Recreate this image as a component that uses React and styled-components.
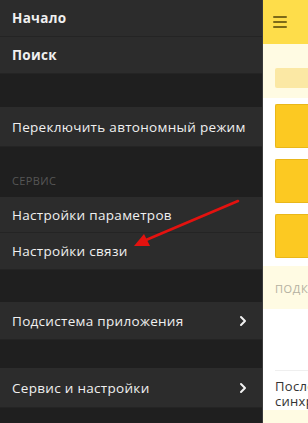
import React from 'react'
import styled, { createGlobalStyle } from 'styled-components';

const GlobalStyle = createGlobalStyle`
    html, body {
        margin: 0;
        padding: 0;
        background: #1f1f1f;
    }
    * {
        box-sizing: border-box;
    }
`;

const menu = [
    { type: 'row', text: 'Начало', bold: true, h: 37 },
    { type: 'row', text: 'Поиск', bold: true, h: 37 },
    { type: 'gap', h: 33 },
    { type: 'row', text: 'Переключить автономный режим', h: 40 },
    { type: 'head', text: 'Сервис', h: 50 },
    { type: 'row', text: 'Настройки параметров', h: 36 },
    { type: 'row', text: 'Настройки связи', h: 37 },
    { type: 'gap', h: 32 },
    { type: 'row', text: 'Подсистема приложения', arrow: true, h: 38 },
    { type: 'gap', h: 28 },
    { type: 'row', text: 'Сервис и настройки', arrow: true, h: 40 },
]

const Chevron = () => (
    <svg width="8" height="12" viewBox="0 0 8 12">
        <path d="M2 2 L6 6 L2 10" fill="none" stroke="#f2f2f2" strokeWidth="2" strokeLinecap="round" strokeLinejoin="round" />
    </svg>
)

const App = () => {
    return (
        <Screen>
            <GlobalStyle />
            <Drawer>
                {menu.map((item, i) => {
                    if (item.type === 'gap') return <Gap key={i} $h={item.h} />
                    if (item.type === 'head') return <Head key={i} $h={item.h}>{item.text}</Head>
                    return (
                        <Row key={i} $h={item.h} $bold={item.bold}>
                            <span>{item.text}</span>
                            {item.arrow && <Chevron />}
                        </Row>
                    )
                })}
                <Gap $h={40} />
            </Drawer>
            <Main>
                <TopBar>
                    <Burger>
                        <i /><i /><i />
                    </Burger>
                </TopBar>
                <SearchArea>
                    <SearchBar />
                </SearchArea>
                <Tiles>
                    <Tile />
                    <Tile />
                    <Tile />
                </Tiles>
                <Caption>подключение</Caption>
                <Status>
                    <StatusBox>
                        <StatusLine>Последняя</StatusLine>
                        <StatusLine>синхронизация</StatusLine>
                    </StatusBox>
                </Status>
                <Footer />
            </Main>
            <Pointer width="308" height="423" viewBox="0 0 308 423">
                <line x1="238" y1="201" x2="146" y2="240" stroke="#e3120f" strokeWidth="2.6" strokeLinecap="round" />
                <polygon points="134,246 144,234 150,246" fill="#e3120f" />
            </Pointer>
        </Screen>
    )
}

const Screen = styled.div`
    position: relative;
    display: flex;
    width: 308px;
    height: 423px;
    overflow: hidden;
    font-family: "Open Sans", "Liberation Sans", sans-serif;
`;

const Drawer = styled.div`
    width: 262px;
    flex-shrink: 0;
    display: flex;
    flex-direction: column;
    background: #1f1f1f;
`;

const Row = styled.div`
    height: ${p => p.$h}px;
    flex-shrink: 0;
    display: flex;
    align-items: center;
    justify-content: space-between;
    padding: 0 15px 0 12px;
    background: #2c2c2c;
    border-bottom: 1px solid #242424;
    color: #f0f0f0;
    font-size: 13.5px;
    letter-spacing: 0.3px;
    font-weight: ${p => (p.$bold ? 700 : 400)};
`;

const Gap = styled.div`
    height: ${p => p.$h}px;
    flex-shrink: 0;
    background: #1f1f1f;
`;

const Head = styled.div`
    height: ${p => p.$h}px;
    flex-shrink: 0;
    display: flex;
    align-items: flex-end;
    padding: 0 12px 9px;
    background: #1f1f1f;
    color: #565656;
    font-size: 11px;
    letter-spacing: 0.4px;
    text-transform: uppercase;
`;

const Main = styled.div`
    flex: 1;
    min-width: 0;
    display: flex;
    flex-direction: column;
    overflow: hidden;
    background: #ffffff;
    border-left: 1px solid #3a3a3a;
`;

const TopBar = styled.div`
    height: 44px;
    flex-shrink: 0;
    display: flex;
    align-items: center;
    padding-left: 10px;
    background: #fedd4a;
`;

const Burger = styled.div`
    display: flex;
    flex-direction: column;
    gap: 3px;
    i {
        display: block;
        width: 14px;
        height: 2px;
        border-radius: 1px;
        background: #7d6a18;
    }
`;

const SearchArea = styled.div`
    height: 54px;
    flex-shrink: 0;
    padding: 24px 0 0 12px;
    background: #fffbe3;
`;

const SearchBar = styled.div`
    height: 20px;
    background: #fbe8a4;
    border-radius: 2px 0 0 2px;
`;

const Tiles = styled.div`
    display: flex;
    flex-direction: column;
    gap: 11px;
    padding: 6px 0 8px 12px;
`;

const Tile = styled.div`
    height: 44px;
    background: #fcc922;
    border: 1px solid #e9b71a;
    border-right: none;
    border-radius: 2px 0 0 2px;
`;

const Caption = styled.div`
    height: 43px;
    flex-shrink: 0;
    display: flex;
    align-items: center;
    padding: 2px 0 0 12px;
    overflow: hidden;
    background: #fffbe3;
    color: #b4b0a0;
    font-size: 11px;
    letter-spacing: 0.6px;
    text-transform: uppercase;
    white-space: nowrap;
`;

const Status = styled.div`
    height: 101px;
    flex-shrink: 0;
    display: flex;
    flex-direction: column;
    justify-content: flex-end;
    padding: 0 0 0 12px;
    background: #ffffff;
`;

const StatusBox = styled.div`
    padding: 8px 0 1px;
    border-top: 1px solid #efefef;
    overflow: hidden;
`;

const StatusLine = styled.div`
    color: #333333;
    font-size: 13px;
    line-height: 15px;
    letter-spacing: 0.3px;
    white-space: nowrap;
    overflow: hidden;
`;

const Footer = styled.div`
    flex: 1;
    background: #fffbe3;
`;

const Pointer = styled.svg`
    position: absolute;
    left: 0;
    top: 0;
    pointer-events: none;
`;

export default App;
